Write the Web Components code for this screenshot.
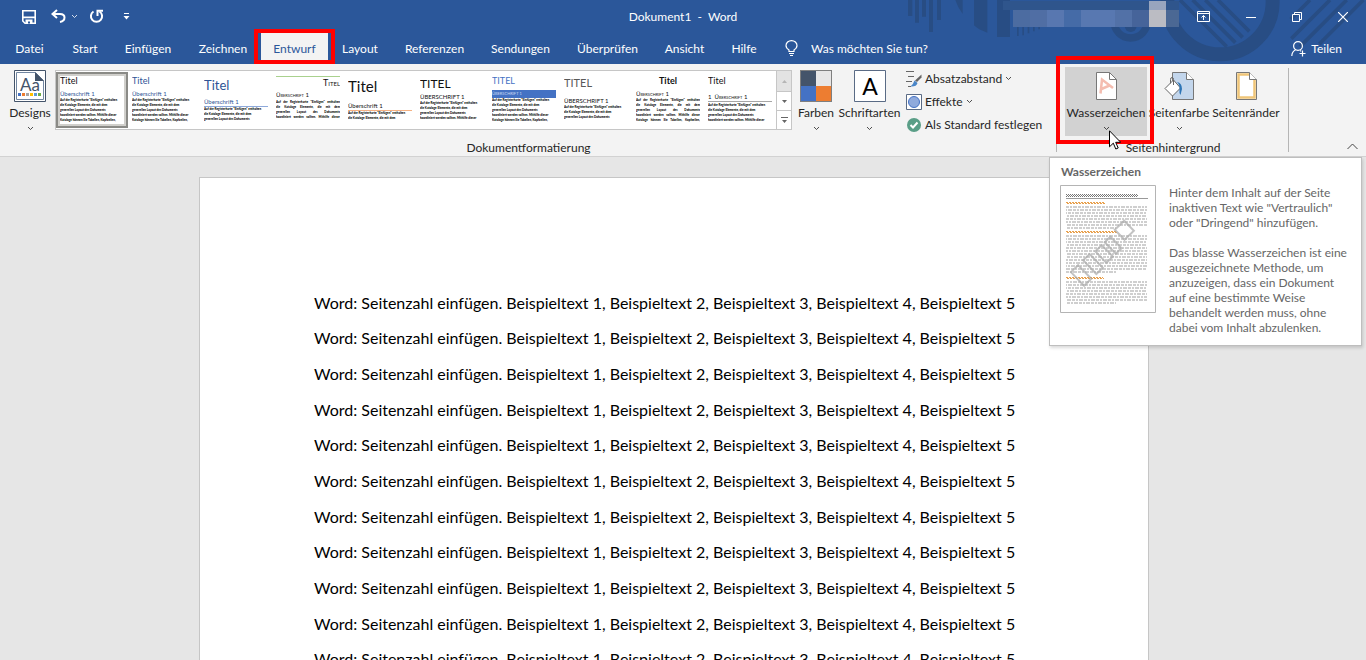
<!DOCTYPE html>
<html lang="de">
<head>
<meta charset="utf-8">
<title>Dokument1 - Word</title>
<style>
  html, body { height: 100%; margin: 0; }
  body { font: 12px/16px Lato, "Open Sans", sans-serif; color: #262626; overflow: hidden; }
</style>
</head>
<body>
<word-window></word-window>

<script>
const chevron = /*html*/`<svg class="chevron" width="7" height="5" viewBox="0 0 7 5"><path d="M1 1l2.500 2.500L6 1" fill="none" stroke="currentColor" stroke-opacity=".8"/></svg>`;

/* ---------- title bar ---------- */
class TitleBar extends HTMLElement {
  constructor() {
    super();
    this.attachShadow({ mode: 'open' });
  }
  connectedCallback() {
    this.shadowRoot.innerHTML = /*html*/`
      <style>
        :host { display: grid; grid-template-columns: 1fr auto 1fr; align-items: center; height: 33px; color: #fff; }
        button { border: 0; padding: 0; background: none; color: inherit; display: flex; align-items: center; justify-content: center; }
        .quick { display: flex; align-items: center; padding-left: 21px; }
        .quick button { height: 20px; }
        .undo { margin-left: 14px; }
        .more-undo { margin: 0 11px 0 5px; }
        .custom { margin-left: 19px; }
        .right { display: flex; justify-content: flex-end; align-items: center; height: 33px; }
        .account { align-self: flex-start; }
        .right button { width: 46px; height: 30px; }
        .right .pin { width: 49px; }
        h1 { font: inherit; margin: 0; white-space: pre; }
      </style>
      <div class="quick">
        <button aria-label="Speichern"><svg width="16" height="16" viewBox="0 0 16 16"><path d="M1.8 1.8h12.4v12.4H4L1.8 12z" fill="none" stroke="#fff" stroke-width="1.6"/><path d="M2 7.6h12v1.6H2zM4.5 10.5h7v4.500h-7z" fill="#fff"/><path d="M7 12.500h2v2H7z" fill="#2b579a"/></svg></button>
        <button class="undo" aria-label="Rückgängig"><svg width="15" height="15" viewBox="0 0 15 15"><path d="M6 1L1.500 5l4.500 4M2 5h7q4.500 0 4.500 3.600T9 13" fill="none" stroke="#fff" stroke-width="2"/></svg></button>
        <button class="more-undo" aria-label="Rückgängig-Liste">${chevron}</button>
        <button aria-label="Wiederholen"><svg width="15" height="15" viewBox="0 0 15 15"><path d="M4.500 2.500a5.600 5.600 0 1 0 6 0" fill="none" stroke="#fff" stroke-width="2"/><path d="M8.500 7V1.800H14" fill="none" stroke="#fff" stroke-width="2"/></svg></button>
        <button class="custom" aria-label="Symbolleiste anpassen"><svg width="7" height="7" viewBox="0 0 7 7"><path d="M1 0h5v1H1zM0.500 3h6l-3 3.500z" fill="#fff"/></svg></button>
      </div>
      <h1>Dokument1  -  Word</h1>
      <div class="right">
        <svg class="account" width="176" height="28" viewBox="0 0 176 28" shape-rendering="crispEdges">
          <path d="M0 1h176v9H0z" fill="#2f558c"/>
          <path d="M10 10h17v17H10z" fill="#4c6ca1"/><path d="M27 10h17v17H27z" fill="#506ea4"/>
          <path d="M44 10h17v17H44z" fill="#5877b0"/><path d="M61 10h17v17H61z" fill="#456ba7"/>
          <path d="M78 10h34v17H78z" fill="#5878b1"/><path d="M112 10h17v17h-17z" fill="#5271a7"/>
          <path d="M129 10h17v17h-17z" fill="#46649a"/><path d="M146 1h17v9h-17z" fill="#98a5be"/>
          <path d="M146 10h17v17h-17z" fill="#bbbcc3"/><path d="M163 10h13v17h-13z" fill="#4b6894"/>
        </svg>
        <button class="pin" aria-label="Menüband-Anzeigeoptionen"><svg width="13" height="11" viewBox="0 0 13 11"><path d="M.5.5h12v10H.5zM.5 2.500h12M6.500 9V4.500M4.500 6.500l2-2 2 2" fill="none" stroke="#fff"/></svg></button>
        <button aria-label="Minimieren"><svg width="10" height="10" viewBox="0 0 10 10"><path d="M0 5.500h10" stroke="#fff"/></svg></button>
        <button aria-label="Wiederherstellen"><svg width="10" height="10" viewBox="0 0 10 10"><path d="M.5 2.500h7v7h-7zM2.500 2.500v-2h7v7h-2" fill="none" stroke="#fff"/></svg></button>
        <button aria-label="Schließen"><svg width="10" height="10" viewBox="0 0 10 10"><path d="M0 0l10 10M10 0L0 10" stroke="#fff" stroke-width="1.200"/></svg></button>
      </div>`;
  }
}
customElements.define('title-bar', TitleBar);

/* ---------- tab row ---------- */
class RibbonTabs extends HTMLElement {
  constructor() {
    super();
    this.attachShadow({ mode: 'open' });
  }
  connectedCallback() {
    const tabs = ['Datei', 'Start', 'Einfügen', 'Zeichnen', 'Entwurf', 'Layout', 'Referenzen', 'Sendungen', 'Überprüfen', 'Ansicht', 'Hilfe'];
    this.shadowRoot.innerHTML = /*html*/`
      <style>
        :host { display: flex; height: 31px; color: #fff; justify-content: space-between; }
        nav { display: grid; grid-template-columns: 59px 52px 74px 76px 67px 64px 85px 87px 87px 67px 52px; }
        button { border: 0; padding: 0; background: none; color: inherit; font: inherit; white-space: nowrap; }
        .active { background: #f3f3f3; color: #2b579a; position: relative; }
        .active::after { content: ""; position: absolute; inset: -4px -7px 0; border: 4px solid #f00; z-index: 2; }
        label { display: flex; align-items: center; gap: 13px; flex: 1; padding-left: 15px; }
        input { border: 0; padding: 0; background: none; color: inherit; font: inherit; width: 160px; outline: 0; }
        input::placeholder { color: #fff; opacity: 1; }
        .share { display: flex; align-items: center; gap: 5px; padding-right: 24px; }
      </style>
      <nav>${tabs.map(t => `<button${t === 'Entwurf' ? ' class="active"' : ''}>${t}</button>`).join('')}</nav>
      <label>
        <svg width="13" height="17" viewBox="0 0 13 17"><path d="M4 11.500V10C2 8.800 1 7.400 1 5.600a5.500 5 0 0 1 11 0C12 7.400 11 8.800 9 10v1.500zM4 13.500h5M5 15.500h3" fill="none" stroke="#fff" stroke-width="1.200"/></svg>
        <input type="text" placeholder="Was möchten Sie tun?" aria-label="Was möchten Sie tun?">
      </label>
      <button class="share">
        <svg width="15" height="16" viewBox="0 0 15 16"><circle cx="7" cy="5" r="4.400" fill="none" stroke="#fff" stroke-width="1.200"/><path d="M4.500 9Q1 10.500.8 15M9 9.500q.6.300 1 .800M11.500 9.500v6M8.500 12.500h6" fill="none" stroke="#fff" stroke-width="1.200"/></svg>
        Teilen
      </button>`;
  }
}
customElements.define('ribbon-tabs', RibbonTabs);

/* ---------- ribbon building blocks ---------- */
class RibbonGroup extends HTMLElement {
  constructor() {
    super();
    this.attachShadow({ mode: 'open' });
  }
  connectedCallback() {
    this.shadowRoot.innerHTML = /*html*/`
      <style>
        :host { display: flex; flex-direction: column; flex: none; position: relative; padding: 3px 8px 0; }
        :host::after { content: ""; position: absolute; right: 0; top: 4px; bottom: 4px; border-right: 1px solid #b5b5b5; }
        .items { display: flex; height: 73px; align-items: flex-start; }
        .label { text-align: center; }
        ::slotted(*) { flex: none; }
      </style>
      <div class="items"><slot></slot></div>
      <div class="label">${this.getAttribute('label')}</div>`;
  }
}
customElements.define('ribbon-group', RibbonGroup);

class BigButton extends HTMLElement {
  constructor() {
    super();
    this.attachShadow({ mode: 'open' });
  }
  connectedCallback() {
    this.shadowRoot.innerHTML = /*html*/`
      <style>
        :host { display: block; position: relative; }
        button {
          width: 100%; height: 69px; border: 0; padding: 3px 0 0; background: none; color: inherit; font: inherit;
          display: flex; flex-direction: column; align-items: center; white-space: nowrap;
        }
        .icon { height: 35px; }
        .chevron { margin-top: 5px; }
        :host([hovered]) button { background: #d2d2d2; }
        :host([hovered])::after { content: ""; position: absolute; inset: -11px -7px -8px -9px; border: 4px solid #f00; z-index: 2; }
      </style>
      <button>
        <span class="icon"><slot></slot></span>
        <span>${this.getAttribute('label')}</span>
        ${this.hasAttribute('menu') ? chevron : ''}
      </button>`;
  }
}
customElements.define('big-button', BigButton);

class SmallButton extends HTMLElement {
  constructor() {
    super();
    this.attachShadow({ mode: 'open' });
  }
  connectedCallback() {
    this.shadowRoot.innerHTML = /*html*/`
      <style>
        :host { display: block; }
        button { border: 0; padding: 0; height: 23px; background: none; color: inherit; font: inherit; display: flex; align-items: center; gap: 3px; white-space: nowrap; }
        .icon { display: flex; width: 16px; }
      </style>
      <button><span class="icon"><slot></slot></span>${this.getAttribute('label')} ${this.hasAttribute('menu') ? chevron : ''}</button>`;
  }
}
customElements.define('small-button', SmallButton);

/* ---------- style set gallery ---------- */
const sampleLines = [
  'Auf der Registerkarte "Einfügen" enthalten',
  'die Kataloge Elemente, die mit dem',
  'generellen Layout des Dokuments',
  'koordiniert werden sollten. Mithilfe dieser',
  'Kataloge können Sie Tabellen, Kopfzeilen,'
];

const styleSets = [
  { title: 'Titel', head: 'Überschrift 1', rows: 5, css: '--hc:#2f5496' },
  { title: 'Titel', head: 'Überschrift 1', rows: 5, css: '--tc:#2f5496;--hc:#2f5496' },
  { title: 'Titel', head: 'Überschrift 1', rows: 3, css: '--tc:#2f5496;--hc:#2f5496;--ts:13px;--tl:18px;--line:1px solid #8ea9db' },
  { title: 'Titel', head: 'Überschrift 1', rows: 4, css: '--ta:right;--caps:small-caps;--top:1px solid #a9d18e;--tl:11px;--hm:3px;--bm:1px;--ba:justify' },
  { title: 'Titel', head: 'Überschrift 1', rows: 2, css: '--ts:15px;--tl:20px;--hm:6px;--line:1px solid #f4b183' },
  { title: 'TITEL', head: 'ÜBERSCHRIFT 1', rows: 4, css: '--ts:12px;--tl:16px;--hm:1px' },
  { title: 'TITEL', head: 'ÜBERSCHRIFT 1', rows: 5, css: '--tc:#4472c4;--hc:#c9d8f2;--hb:#4472c4;--hs:4px' },
  { title: 'TITEL', head: 'ÜBERSCHRIFT 1', rows: 3, css: '--tc:#595959;--ts:11px;--tl:14px;--hm:7px' },
  { title: 'Titel', head: 'Überschrift 1', rows: 5, css: '--ta:center;--caps:small-caps;--tcaps:normal;--tw:700;--ba:justify' },
  { title: 'Titel', head: '1&ensp;Überschrift 1', rows: 4, css: '--caps:small-caps;--tcaps:normal;--hm:7px;--line:1px solid #a6a6a6;--bm:1px' }
];

class StyleGallery extends HTMLElement {
  constructor() {
    super();
    this.attachShadow({ mode: 'open' });
  }
  connectedCallback() {
    this.shadowRoot.innerHTML = /*html*/`
      <style>
        :host { display: flex; height: 58px; border: 1px solid #c6c6c6; background: #fff; color: #111; }
        button { border: 0; padding: 0; background: none; font: inherit; color: inherit; }
        .set { width: 72px; height: 56px; margin-top: 1px; padding: 4px; box-sizing: border-box; text-align: left; display: block; }
        .set.selected { border: 2px solid #8a8a86; padding: 2px; background: #d0cfcb; }
        .sheet { display: block; height: 48px; overflow: hidden; background: #fff; border-top: var(--top, 0); box-sizing: border-box; }
        .sheet span { display: block; white-space: nowrap; }
        .title { font-size: var(--ts, 9px); line-height: var(--tl, 10px); color: var(--tc); text-align: var(--ta); font-variant: var(--tcaps, var(--caps)); font-weight: var(--tw); }
        .head { margin-top: var(--hm, 4px); font-size: var(--hs, 6px); line-height: 8px; color: var(--hc); background: var(--hb); border-bottom: var(--line, 0); font-variant: var(--caps); }
        .body { margin-top: var(--bm, 0); font-size: 3px; line-height: 5px; font-weight: 900; color: #000; text-align-last: var(--ba); }
        .scroll { display: grid; grid-template-rows: 20px 18px 18px; gap: 1px; width: 14px; margin-left: auto; border-left: 1px solid #c6c6c6; background: #c6c6c6; }
        .scroll button { background: #fff; display: flex; align-items: center; justify-content: center; color: #666; }
        .scroll button:first-child { background: #e3e3e3; color: #b5b5b5; }
      </style>
      ${styleSets.map((s, i) => `
        <button class="set${i === 0 ? ' selected' : ''}" style="${s.css}"><span class="sheet">
          <span class="title">${s.title}</span><span class="head">${s.head}</span>
          <span class="body">${sampleLines.slice(0, s.rows).map(l => `<span>${l}</span>`).join('')}</span>
        </span></button>`).join('')}
      <div class="scroll">
        <button aria-label="Nach oben"><svg width="5" height="3"><path d="M0 3h5L2.500 0z" fill="currentColor"/></svg></button>
        <button aria-label="Nach unten"><svg width="5" height="3"><path d="M0 0h5L2.500 3z" fill="currentColor"/></svg></button>
        <button aria-label="Weitere"><svg width="7" height="6"><path d="M0 0h7v1H0zM1 3h5L3.500 6z" fill="currentColor"/></svg></button>
      </div>`;
  }
}
customElements.define('style-gallery', StyleGallery);

/* ---------- tooltip ---------- */
class HelpTip extends HTMLElement {
  constructor() {
    super();
    this.attachShadow({ mode: 'open' });
  }
  // grey text rows of the page preview
  rows(y, n) {
    let out = '';
    for (let i = 0; i < n; i++) {
      const w = i === n - 1 ? 50 : 81;
      out += `<path d="M6 ${y + i * 3}h${w}" stroke="#8a8a8a" stroke-width="2" stroke-dasharray="3 1 2 1 4 1" stroke-dashoffset="${i * 5}"/>`;
    }
    return out;
  }
  connectedCallback() {
    this.shadowRoot.innerHTML = /*html*/`
      <style>
        :host { display: block; box-sizing: border-box; border: 1px solid #bebebe; background: #fff; color: #666; padding: 6px 10px 10px; box-shadow: 1px 2px 3px rgba(0, 0, 0, .15); }
        h2 { font: inherit; font-weight: 700; margin: 0 0 5px 1px; }
        .row { display: flex; gap: 13px; align-items: flex-start; }
        svg { flex: none; }
        p { margin: 0 0 15px; line-height: 15px; }
        p:last-child { margin: 0; }
      </style>
      <h2>Wasserzeichen</h2>
      <div class="row">
        <svg width="96" height="128" viewBox="0 0 96 128">
          <path d="M.5.500h95v127H.5z" fill="#fff" stroke="#b4b4b4"/>
          <path d="M6 9.500h72M7 10.500h72M6 11.500h72" stroke="#777" stroke-dasharray="1 1"/>
          <path d="M6 13.500h82" stroke="#999"/>
          <path d="M6 17.500h39M7 18.500h39M6 46.500h50M7 47.500h50M6 92.500h37M7 93.500h37" stroke="#e8a04c" stroke-dasharray="2 1"/>
          <g opacity=".4">${this.rows(22, 8)}${this.rows(51, 13)}${this.rows(97, 8)}</g>
          <g fill="none" stroke="#aaa" stroke-opacity=".7" stroke-width="2" transform="translate(27 98) rotate(-44)">
            <path d="M-4-19h10V0H-4zM13-19h9V0h-9zM28-17h9v16h-9zM41-17h8v16h-8zM57-19h13V-5H57z"/>
          </g>
        </svg>
        <div>
          <p>Hinter dem Inhalt auf der Seite inaktiven Text wie "Vertraulich" oder "Dringend" hinzufügen.</p>
          <p>Das blasse Wasserzeichen ist eine ausgezeichnete Methode, um anzuzeigen, dass ein Dokument auf eine bestimmte Weise behandelt werden muss, ohne dabei vom Inhalt abzulenken.</p>
        </div>
      </div>`;
  }
}
customElements.define('help-tip', HelpTip);

/* ---------- document page ---------- */
class DocumentPage extends HTMLElement {
  constructor() {
    super();
    this.attachShadow({ mode: 'open' });
  }
  connectedCallback() {
    const line = 'Word: Seitenzahl einfügen. Beispieltext 1, Beispieltext 2, Beispieltext 3, Beispieltext 4, Beispieltext 5';
    this.shadowRoot.innerHTML = /*html*/`
      <style>
        :host { display: block; flex: 1; min-height: 0; overflow: hidden; background: #e6e6e6; padding: 20px 18px 0 0; }
        article { max-width: 950px; min-height: 1200px; margin: 0 auto; box-sizing: border-box; padding: 107px 100px 0 114px; background: #fff; border: 1px solid #c6c6c6; font: 16px/20px Lato, "Open Sans", sans-serif; color: #000; }
        .lines { display: grid; grid-auto-rows: 1fr; align-items: center; height: 392px; }
        p { margin: 0; white-space: nowrap; }
      </style>
      <article><div class="lines">${`<p>${line}</p>`.repeat(11)}</div></article>`;
  }
}
customElements.define('document-page', DocumentPage);

/* ---------- window ---------- */
class WordWindow extends HTMLElement {
  constructor() {
    super();
    this.attachShadow({ mode: 'open' });
  }
  connectedCallback() {
    this.shadowRoot.innerHTML = /*html*/`
      <style>
        :host { display: flex; flex-direction: column; height: 100vh; }
        header { position: relative; background: #2b579a; }
        header > * { position: relative; }
        .decor { position: absolute; right: 0; top: 0; }
        .ribbon { display: flex; position: relative; height: 92px; background: #f3f3f3; border-bottom: 1px solid #d2d2d2; }
        ribbon-group:first-child { width: 1057px; box-sizing: border-box; }
        .designs { width: 44px; }
        style-gallery { width: 735px; margin: 3px 3px 0; }
        .colors { width: 42px; }
        .fonts { width: 65px; }
        .column { margin-left: 4px; }
        .watermark { width: 82px; }
        .pagecolor { width: 64px; }
        .borders { width: 70px; }
        .collapse { position: absolute; right: 5px; bottom: 0; border: 0; padding: 3px; background: none; }
        help-tip { position: absolute; right: 4px; top: 93px; width: 313px; z-index: 3; }
        .cursor { position: absolute; left: 1109px; top: 66px; z-index: 4; }
      </style>
      <header>
        <svg class="decor" width="486" height="64" viewBox="0 0 1458 192" fill="#284d84" stroke="#284d84" stroke-width="0">
          <path d="M84 0h13v48H84zM105 0h12v68h-12zM126 0h12v50h-12zM147 0h12v96h-12zM171 0h12v60h-12z"/>
          <path d="M226 0h22v42Q232 20 226 0zM282 0h40v98Q296 90 282 76zM351 0h39v111h-39z"/>
          <path d="M411 80h5v28h-5zM427 80h5v26h-5zM443 80h5v20h-5zM459 80h5v14h-5zM475 80h5v8h-5z"/>
          <circle cx="752" cy="64" r="50" fill="none" stroke-width="22"/>
          <circle cx="752" cy="78" r="18"/>
          <circle cx="1020" cy="5" r="158" fill="none" stroke-width="42"/>
          <g fill="none" stroke-width="11"><path d="M900 0l140 140M938 0l128 128M976 0l112 112M1014 0l94 94"/><path d="M1290 0l-58 58M1350 0L1234 116M1400 0L1260 140M1450 0l-132 132"/></g>
        </svg>
        <title-bar></title-bar>
        <ribbon-tabs></ribbon-tabs>
      </header>
      <div class="ribbon">
        <ribbon-group label="Dokumentformatierung">
          <big-button class="designs" label="Designs" menu>
            <svg width="32" height="32" viewBox="0 0 32 32"><path d="M.500.500h31v31H.500z" fill="#fff" stroke="#44546a"/><path d="M2.500 2.500h19l8 8v19h-27z" fill="#fff" stroke="#7286a0"/><path d="M21 2v9h9z" fill="#44546a"/><text x="6" y="21" font-size="17" fill="#44546a">Aa</text><path d="M4 23h3v3H4z" fill="#4472c4"/><path d="M8 23h3v3H8z" fill="#ed7d31"/><path d="M12 23h3v3h-3z" fill="#a5a5a5"/><path d="M16 23h3v3h-3z" fill="#ffc000"/><path d="M20 23h3v3h-3z" fill="#5b9bd5"/><path d="M24 23h3v3h-3z" fill="#70ad47"/></svg>
          </big-button>
          <style-gallery></style-gallery>
          <big-button class="colors" label="Farben" menu>
            <svg width="32" height="32" viewBox="0 0 32 32"><path d="M0 0h32v32H0z" fill="#7f7f7f"/><path d="M1 1h15v15H1z" fill="#44546a"/><path d="M16 1h15v15H16z" fill="#e7e6e6"/><path d="M1 16h15v15H1z" fill="#4472c4"/><path d="M16 16h15v15H16z" fill="#ed7d31"/></svg>
          </big-button>
          <big-button class="fonts" label="Schriftarten" menu>
            <svg width="32" height="32" viewBox="0 0 32 32"><path d="M.500.500h31v31H.500z" fill="#fff" stroke="#5a6b85"/><text x="16" y="25" font-size="23" text-anchor="middle" fill="#000">A</text></svg>
          </big-button>
          <div class="column">
            <small-button label="Absatzabstand" menu>
              <svg width="16" height="16" viewBox="0 0 16 16"><path d="M0 .500h8M2 5.500h6M0 10.500h6M2 15.500h3" stroke="#666"/><path d="M15.500 3.500v3L11 11 9 9.500z" fill="#666"/><path d="M8.500 9.500l3 2.500q-1 4-7 3.500 2.500-1.500 4-6z" fill="#4a86c8"/></svg>
            </small-button>
            <small-button label="Effekte" menu>
              <svg width="16" height="16" viewBox="0 0 16 16"><path d="M.500.500h15v15H.500z" fill="#fff" stroke="#5a6b85"/><circle cx="8" cy="8" r="5.500" fill="#8faadc" stroke="#4472c4"/></svg>
            </small-button>
            <small-button label="Als Standard festlegen">
              <svg width="16" height="16" viewBox="0 0 16 16"><circle cx="8" cy="8" r="7" fill="#5a9e87"/><path d="M4.500 8l2.500 2.500L11.500 5.500" fill="none" stroke="#fff" stroke-width="2"/></svg>
            </small-button>
          </div>
        </ribbon-group>
        <ribbon-group label="Seitenhintergrund">
          <big-button class="watermark" label="Wasserzeichen" menu hovered>
            <svg width="21" height="32" viewBox="0 0 21 32"><path d="M.500 2.500h13l7 7v20H.500z" fill="#fff" stroke="#777"/><path d="M13.500 2.500v7h7" fill="none" stroke="#777"/><path d="M4.500 23.500L6 9.500l11 8.500M5.500 19l8-3.500" fill="none" stroke="#f4bdb0" stroke-width="2.500"/></svg>
          </big-button>
          <big-button class="pagecolor" label="Seitenfarbe" menu>
            <svg width="30" height="32" viewBox="0 0 30 32"><path d="M8.500 2.500h14l7 7v20h-21z" fill="#c3d6ec" stroke="#777"/><path d="M22.500 2.500v7h7" fill="#fff" stroke="#777"/><path d="M1 18.500L9.500 10l7 8-8 8z" fill="#fff" stroke="#666"/><path d="M9.500 15V9.500q0-2-1.500-2T6.500 9.500v4" fill="none" stroke="#666"/><path d="M13 12q5 1 5 7l-1.500 6q-1.500-2-1-5.500.5-5-2.500-7.500z" fill="#2e75b6"/></svg>
          </big-button>
          <big-button class="borders" label="Seitenränder">
            <svg width="21" height="32" viewBox="0 0 21 32"><path d="M.500 2.500h13l7 7v20H.500z" fill="#fff" stroke="#777"/><path d="M13 4.500H2.500v23h16V10" fill="none" stroke="#efc578" stroke-width="2.500"/><path d="M13.500 2.500v7h7" fill="#fff" stroke="#777"/></svg>
          </big-button>
        </ribbon-group>
        <button class="collapse" aria-label="Menüband reduzieren"><svg width="11" height="7" viewBox="0 0 11 7"><path d="M.5 6l5-5 5 5" fill="none" stroke="#444"/></svg></button>
        <svg class="cursor" width="12" height="20" viewBox="0 0 12 20"><path d="M.500.800v16l3.800-3.600 2.500 5.800 2.400-1-2.500-5.700h5z" fill="#fff" stroke="#000"/></svg>
        <help-tip></help-tip>
      </div>
      <document-page></document-page>`;
  }
}
customElements.define('word-window', WordWindow);
</script>
</body>
</html>
